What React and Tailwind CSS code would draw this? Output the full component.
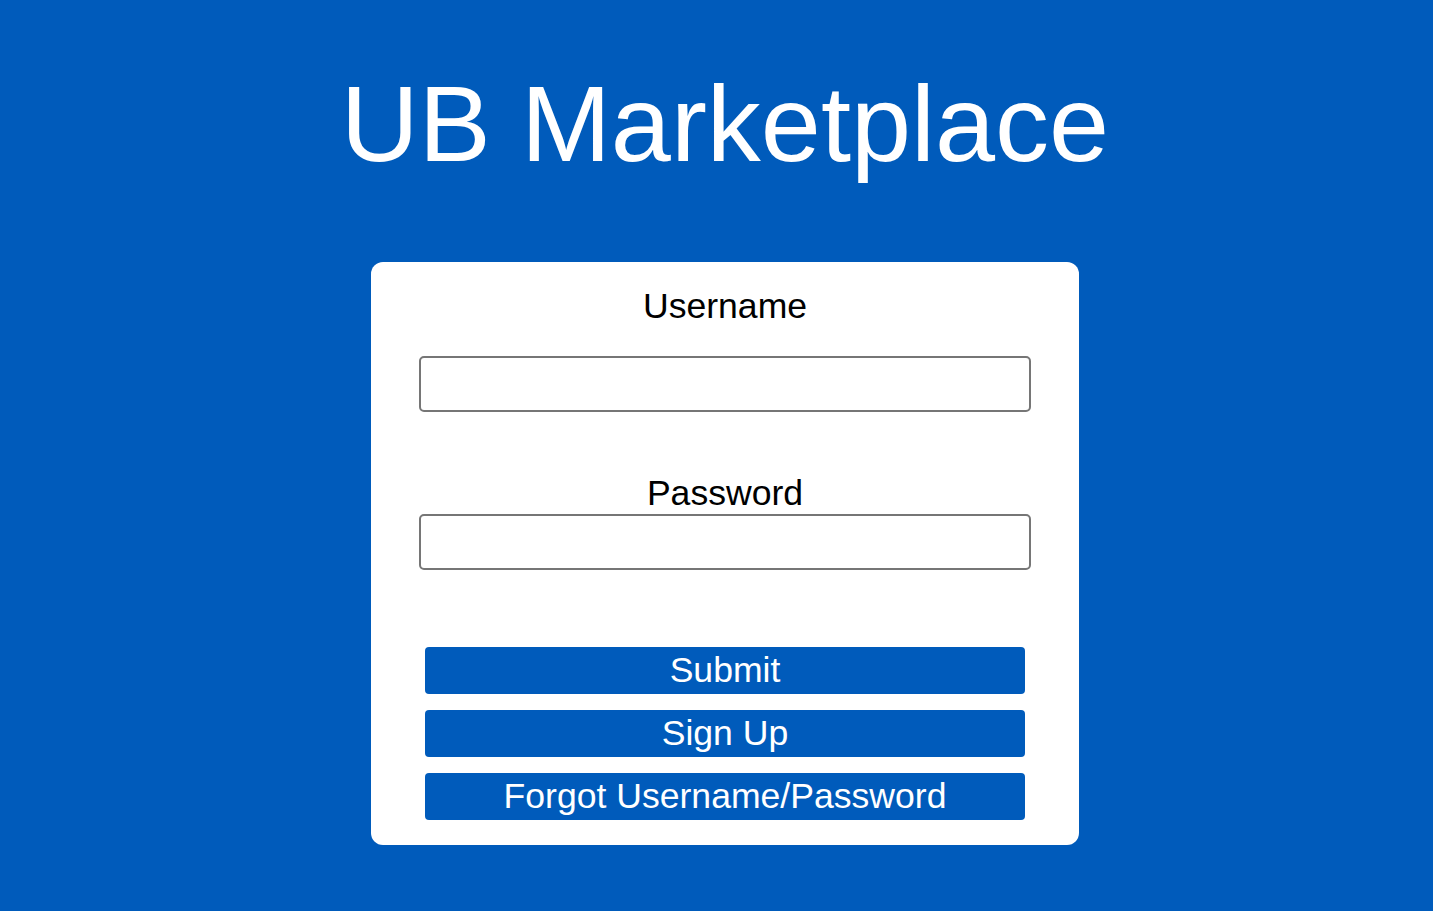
export default function App() {
  return (
    <div className="min-h-[911px] w-full bg-[#005bbb] flex flex-col items-center pl-[17px] font-['Liberation_Sans',Arial,sans-serif]">
      <h1 className="text-white text-[108px] leading-[124px] mt-[62px]">UB Marketplace</h1>
      <div className="mt-[76px] w-[708px] bg-white rounded-[12px] flex flex-col items-center pt-[24px] pb-[25px]">
        <label className="text-black text-[35.6px] leading-[41px]">Username</label>
        <input type="text" className="mt-[29px] w-[612px] h-[56px] border-[2.5px] border-[#767676] rounded-[5px] bg-white" />
        <label className="mt-[61px] text-black text-[35.6px] leading-[41px]">Password</label>
        <input type="password" className="mt-0 w-[612px] h-[56px] border-[2.5px] border-[#767676] rounded-[5px] bg-white" />
        <div className="mt-[77px] flex flex-col gap-[16px]">
          <button className="w-[600px] h-[47px] bg-[#005bbb] text-white text-[35.6px] leading-[41px] rounded-[4px]">Submit</button>
          <button className="w-[600px] h-[47px] bg-[#005bbb] text-white text-[35.6px] leading-[41px] rounded-[4px]">Sign Up</button>
          <button className="w-[600px] h-[47px] bg-[#005bbb] text-white text-[35.6px] leading-[41px] rounded-[4px]">Forgot Username/Password</button>
        </div>
      </div>
    </div>
  );
}
